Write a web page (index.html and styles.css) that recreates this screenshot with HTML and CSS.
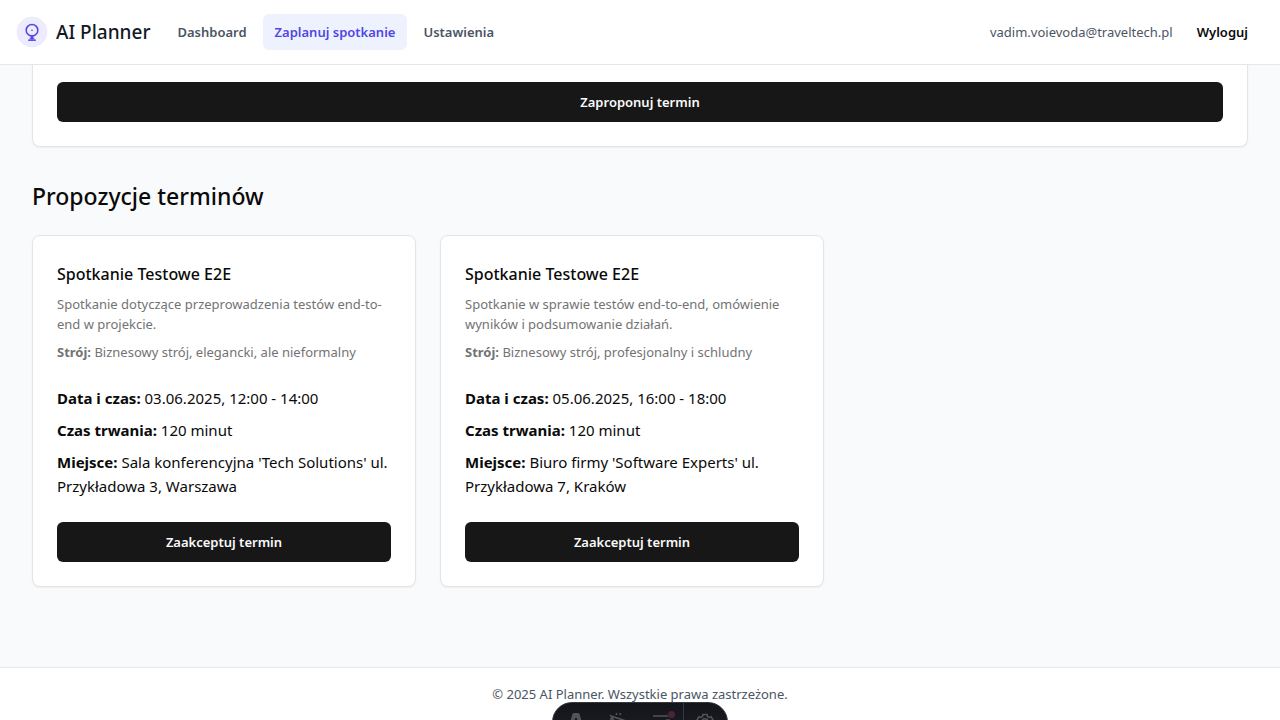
FILE: index.html
```html
<!DOCTYPE html>
<html lang="pl">
<head>
<meta charset="utf-8">
<meta name="viewport" content="width=device-width, initial-scale=1">
<title>AI Planner</title>
<link rel="stylesheet" href="styles.css">
</head>
<body>
<header class="header">
  <a class="brand" href="#">
    <svg class="brand-logo" viewBox="0 0 32 32" aria-hidden="true">
      <circle cx="16" cy="16" r="15.3" fill="#edebfd"/>
      <circle cx="16" cy="14.2" r="5.8" fill="none" stroke="#4f46e5" stroke-width="1.5"/>
      <circle cx="16" cy="14.2" r="0.8" fill="#4f46e5"/>
      <path d="M14.600 19.500h2.800v2.800h1v1.300h-4.800v-1.300h1z" fill="#4f46e5"/>
      <path d="M12.200 24.200h7.600" stroke="#4f46e5" stroke-width="1.400"/>
    </svg>
    <span>AI Planner</span>
  </a>
  <nav class="nav">
    <a class="nav-link" href="#">Dashboard</a>
    <a class="nav-link nav-link-active" href="#" aria-current="page">Zaplanuj spotkanie</a>
    <a class="nav-link" href="#">Ustawienia</a>
  </nav>
  <div class="account">
    <span class="account-email">vadim.voievoda@traveltech.pl</span>
    <button class="logout" type="button">Wyloguj</button>
  </div>
</header>

<main class="main">
  <form class="card form-card">
    <button class="button" type="button">Zaproponuj termin</button>
  </form>

  <h2 class="section-title">Propozycje terminów</h2>
  <div class="proposals">
    <article class="card">
      <h3 class="card-title">Spotkanie Testowe E2E</h3>
      <div class="summary">
        <p>Spotkanie dotyczące przeprowadzenia testów end-to-end w projekcie.</p>
        <p><strong>Strój:</strong> Biznesowy strój, elegancki, ale nieformalny</p>
      </div>
      <div class="details">
        <p><strong>Data i czas:</strong> 03.06.2025, 12:00 - 14:00</p>
        <p><strong>Czas trwania:</strong> 120 minut</p>
        <p><strong>Miejsce:</strong> Sala konferencyjna 'Tech Solutions' ul. Przykładowa 3, Warszawa</p>
      </div>
      <button class="button" type="button">Zaakceptuj termin</button>
    </article>
    <article class="card">
      <h3 class="card-title">Spotkanie Testowe E2E</h3>
      <div class="summary">
        <p>Spotkanie w sprawie testów end-to-end, omówienie wyników i podsumowanie działań.</p>
        <p><strong>Strój:</strong> Biznesowy strój, profesjonalny i schludny</p>
      </div>
      <div class="details">
        <p><strong>Data i czas:</strong> 05.06.2025, 16:00 - 18:00</p>
        <p><strong>Czas trwania:</strong> 120 minut</p>
        <p><strong>Miejsce:</strong> Biuro firmy 'Software Experts' ul. Przykładowa 7, Kraków</p>
      </div>
      <button class="button" type="button">Zaakceptuj termin</button>
    </article>
  </div>
</main>

<footer class="footer">© 2025 AI Planner. Wszystkie prawa zastrzeżone.</footer>

<div class="toolbar">
  <button class="tool" type="button" aria-label="Menu">
    <svg viewBox="0 0 20 20" aria-hidden="true"><path d="M2 18 6.300 2.400Q6.700 1 8.200 1h3.600q1.500 0 1.900 1.400L18 18l-4.800-1.300L10.900 6H9.100L6.800 16.700z" fill="#515359"/></svg>
  </button>
  <button class="tool" type="button" aria-label="Inspect">
    <svg viewBox="0 0 20 20" aria-hidden="true"><path d="m2 4 15 5-5 2.500-2 5zM7.500 3V1M11 3l.5-2M3 7.500 1 6.500" fill="none" stroke="#515359" stroke-width="1.600"/></svg>
  </button>
  <button class="tool" type="button" aria-label="Audit">
    <svg viewBox="0 0 20 20" aria-hidden="true"><path d="M1 4h15M14 8h4" stroke="#515359" stroke-width="1.700"/></svg>
    <span class="tool-badge"></span>
  </button>
  <button class="tool tool-settings" type="button" aria-label="Settings">
    <svg viewBox="0 0 20 20" aria-hidden="true"><path d="M8 2.500h4l.5 2 1.600.9 2-.6 2 3.400-1.500 1.500v1.600l1.500 1.500-2 3.400-2-.6-1.600.9-.5 2H8l-.5-2-1.600-.9-2 .6-2-3.400 1.500-1.500v-1.600L1.900 8.200l2-3.400 2 .6 1.600-.9z" fill="none" stroke="#515359" stroke-width="1.600"/><circle cx="10" cy="9.700" r="3" fill="none" stroke="#515359" stroke-width="1.500"/></svg>
  </button>
</div>
</body>
</html>
```
FILE: styles.css
```css
* {
  box-sizing: border-box;
}

body {
  margin: 0;
  min-height: 100vh;
  display: flex;
  flex-direction: column;
  background: #f9fafb;
  color: #0a0a0a;
  font-family: "Noto Sans", "Open Sans", sans-serif;
  font-size: 15px;
  line-height: 24px;
}

h2,
h3,
p {
  margin: 0;
}

a {
  color: inherit;
  text-decoration: none;
}

button {
  font-family: inherit;
  cursor: pointer;
}

.header {
  display: flex;
  align-items: center;
  height: 65px;
  padding: 0 16px;
  background: #fff;
  border-bottom: 1px solid #e5e7eb;
}

.brand {
  display: flex;
  align-items: center;
  gap: 8px;
  color: #111827;
  font-size: 19px;
  font-weight: 500;
}

.brand-logo {
  width: 32px;
  height: 32px;
}

.nav {
  display: flex;
  gap: 4px;
  margin-left: 15px;
}

.nav-link {
  padding: 8px 12px;
  border-radius: 6px;
  color: #4b5563;
  font-size: 13px;
  font-weight: 600;
  line-height: 20px;
}

.nav-link-active {
  background: #eef2ff;
  color: #4f46e5;
}

.account {
  display: flex;
  align-items: center;
  gap: 8px;
  margin-left: auto;
  font-size: 13px;
  line-height: 20px;
}

.account-email {
  color: #4b5563;
}

.logout {
  padding: 8px 16px;
  border: 0;
  background: none;
  color: #0a0a0a;
  font-size: 13px;
  font-weight: 600;
  line-height: 20px;
}

.main {
  flex: 1;
  padding: 0 32px 80px;
}

.card {
  padding: 24px;
  background: #fff;
  border: 1px solid #e5e5e5;
  border-radius: 8px;
  box-shadow: 0 1px 2px rgba(0, 0, 0, 0.06);
}

.form-card {
  padding-top: 17px;
  border-top: 0;
  border-top-left-radius: 0;
  border-top-right-radius: 0;
}

.button {
  display: block;
  width: 100%;
  padding: 10px 16px;
  border: 0;
  border-radius: 6px;
  background: #171717;
  color: #fafafa;
  font-size: 13px;
  font-weight: 600;
  line-height: 20px;
}

.section-title {
  margin: 33px 0 23px;
  font-size: 23px;
  font-weight: 500;
  line-height: 32px;
}

.proposals {
  display: grid;
  grid-template-columns: repeat(auto-fill, minmax(0, 384px));
  gap: 24px;
}

.card-title {
  margin-bottom: 6px;
  font-size: 16px;
  font-weight: 500;
  line-height: 28px;
}

.summary {
  display: grid;
  gap: 8px;
  color: #737373;
  font-size: 13px;
  line-height: 20px;
}

.details {
  display: grid;
  gap: 8px;
  margin: 24px 0;
}

.footer {
  padding: 16px;
  background: #fff;
  border-top: 1px solid #e5e7eb;
  color: #4b5563;
  font-size: 13px;
  line-height: 20px;
  text-align: center;
}

.toolbar {
  position: fixed;
  bottom: -22px;
  left: 50%;
  display: flex;
  height: 40px;
  padding: 0 1px;
  overflow: hidden;
  transform: translateX(-50%);
  border: 1px solid #343841;
  border-radius: 20px;
  background: linear-gradient(#13151a, #1d1f26);
}

.tool {
  position: relative;
  display: grid;
  place-items: center;
  width: 43px;
  padding: 0;
  border: 0;
  background: none;
}

.tool svg {
  width: 20px;
  height: 20px;
}

.tool-settings {
  border-left: 1px solid #343841;
}

.tool-badge {
  position: absolute;
  top: 8px;
  right: 8px;
  width: 7px;
  height: 7px;
  border-radius: 50%;
  background: #4c2436;
}
```
